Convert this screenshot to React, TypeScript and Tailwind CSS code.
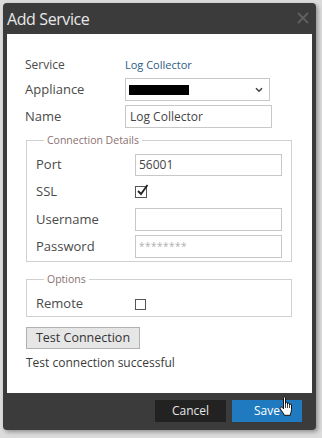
import React from "react";

const font = { fontFamily: '"Open Sans", "Liberation Sans", sans-serif' };

function Hand() {
  return (
    <svg width="15" height="21" viewBox="0 0 15 21" className="absolute left-[279px] top-[396px]">
      <path
        d="M4.5 1.8 C4.5 0.6 6.5 0.6 6.5 1.8 V8 V7 C6.5 5.9 8.5 5.9 8.5 7 V8.6 V7.8 C8.5 6.8 10.5 6.8 10.5 7.8 V9.2 V8.8 C10.5 7.9 12.5 7.9 12.5 8.8 V13.5 C12.5 16 11.3 17 11.3 19.3 H5.2 C5.2 17.6 1.6 14.2 1.2 12.6 C0.8 11.3 2.2 10.5 3.2 11.4 L4.5 12.8 Z"
        fill="white"
        stroke="#111"
        strokeWidth="1"
        strokeLinejoin="round"
      />
      <path d="M6.5 8 V12 M8.5 8.6 V12 M10.5 9.2 V12" stroke="#111" strokeWidth="0.8" />
    </svg>
  );
}

export default function App() {
  return (
    <div className="relative h-[438px] w-[322px] bg-[#dcdcdc] pl-[3px] pt-[3px]" style={font}>
      <div className="h-[427px] w-[313px] rounded-[4px] bg-[#3b3b3b] shadow-[2px_2px_4px_rgba(0,0,0,0.35)]">
        {/* title */}
        <div className="relative flex h-[31px] items-center pl-[4px]">
          <span className="text-[16px] leading-none tracking-[-0.4px] text-[#e8e8e8]">Add Service</span>
          <svg width="12" height="12" viewBox="0 0 12 12" className="absolute right-[7px] top-[9px]">
            <path d="M1 1 L11 11 M11 1 L1 11" stroke="#5f5f5f" strokeWidth="2" />
          </svg>
        </div>
        {/* content */}
        <div className="mx-[4px] h-[359px] bg-white pl-[18px] pt-[23px] text-[12px] text-[#4a4a4a]">
          <div className="flex h-[16px] items-center">
            <span className="w-[100px]">Service</span>
            <span className="text-[11px] text-[#2b5b86]">Log Collector</span>
          </div>
          <div className="mt-[5px] flex h-[23px] items-center">
            <span className="w-[100px] text-[13px]">Appliance</span>
            <div className="flex h-[23px] w-[145px] items-center justify-between border border-[#c8c8c8] pl-[3px] pr-[6px]">
              <div className="h-[10px] w-[60px] bg-black" />
              <svg width="8" height="6" viewBox="0 0 8 6">
                <path d="M1 1.2 L4 4.2 L7 1.2" stroke="#444" strokeWidth="1.6" fill="none" />
              </svg>
            </div>
          </div>
          <div className="mt-[4px] flex h-[23px] items-center">
            <span className="w-[100px] text-[13px]">Name</span>
            <div className="flex h-[23px] w-[147px] items-center border border-[#c8c8c8] pl-[4px] text-[12px] text-[#444]">
              Log Collector
            </div>
          </div>
          <fieldset className="mt-[5px] ml-[1px] w-[266px] border border-[#d0d0d0] pb-[3px] pl-[9px]">
            <legend className="ml-[8px] px-[3px] text-[10.5px] leading-[14px] text-[#8a7070]">Connection Details</legend>
            <div className="mt-[7px] flex h-[22px] items-center">
              <span className="w-[99px] text-[13px]">Port</span>
              <div className="flex h-[22px] w-[147px] items-center border border-[#c8c8c8] pl-[3px] text-[12px] text-[#444]">
                56001
              </div>
            </div>
            <div className="mt-[5px] flex h-[22px] items-center">
              <span className="w-[99px] text-[13px]">SSL</span>
              <div className="relative h-[12px] w-[12px] border border-[#555]">
                <svg width="14" height="14" viewBox="0 0 14 14" className="absolute left-[0px] top-[-4px]">
                  <path d="M2 8 L5 11 L11.5 2" stroke="#222" strokeWidth="1.8" fill="none" />
                </svg>
              </div>
            </div>
            <div className="mt-[5px] flex h-[23px] items-center">
              <span className="w-[99px] text-[13px]">Username</span>
              <div className="h-[23px] w-[147px] border border-[#c8c8c8]" />
            </div>
            <div className="mt-[4px] flex h-[23px] items-center">
              <span className="w-[99px] text-[13px]">Password</span>
              <div className="flex h-[23px] w-[147px] items-center border border-[#c8c8c8] pl-[3px] text-[10px] tracking-[0.5px] text-[#b0b0b0]">
                ********
              </div>
            </div>
          </fieldset>
          <fieldset className="mt-[10px] ml-[1px] h-[45px] w-[266px] border border-[#d0d0d0] pl-[9px]">
            <legend className="ml-[8px] px-[3px] text-[10.5px] leading-[14px] text-[#8a7070]">Options</legend>
            <div className="mt-[10px] flex h-[16px] items-center">
              <span className="w-[99px] text-[13px]">Remote</span>
              <div className="h-[11px] w-[11px] border border-[#555]" />
            </div>
          </fieldset>
          <button className="mt-[10px] ml-[1px] flex h-[22px] w-[114px] items-center justify-center border border-[#b0b0b0] bg-[#e6e6e6] text-[12.5px] text-[#333]">
            Test Connection
          </button>
          <div className="mt-[5px] ml-[1px] text-[12px] text-[#3a3a3a]">Test connection successful</div>
        </div>
        {/* footer */}
        <div className="flex justify-end gap-[6px] pr-[14px] pt-[7px]">
          <button className="h-[22px] w-[71px] bg-[#222222] text-[12px] text-[#e6e6e6]">Cancel</button>
          <button className="h-[22px] w-[70px] bg-[#1f7ac0] text-[12px] text-white">Save</button>
        </div>
      </div>
      <Hand />
    </div>
  );
}
